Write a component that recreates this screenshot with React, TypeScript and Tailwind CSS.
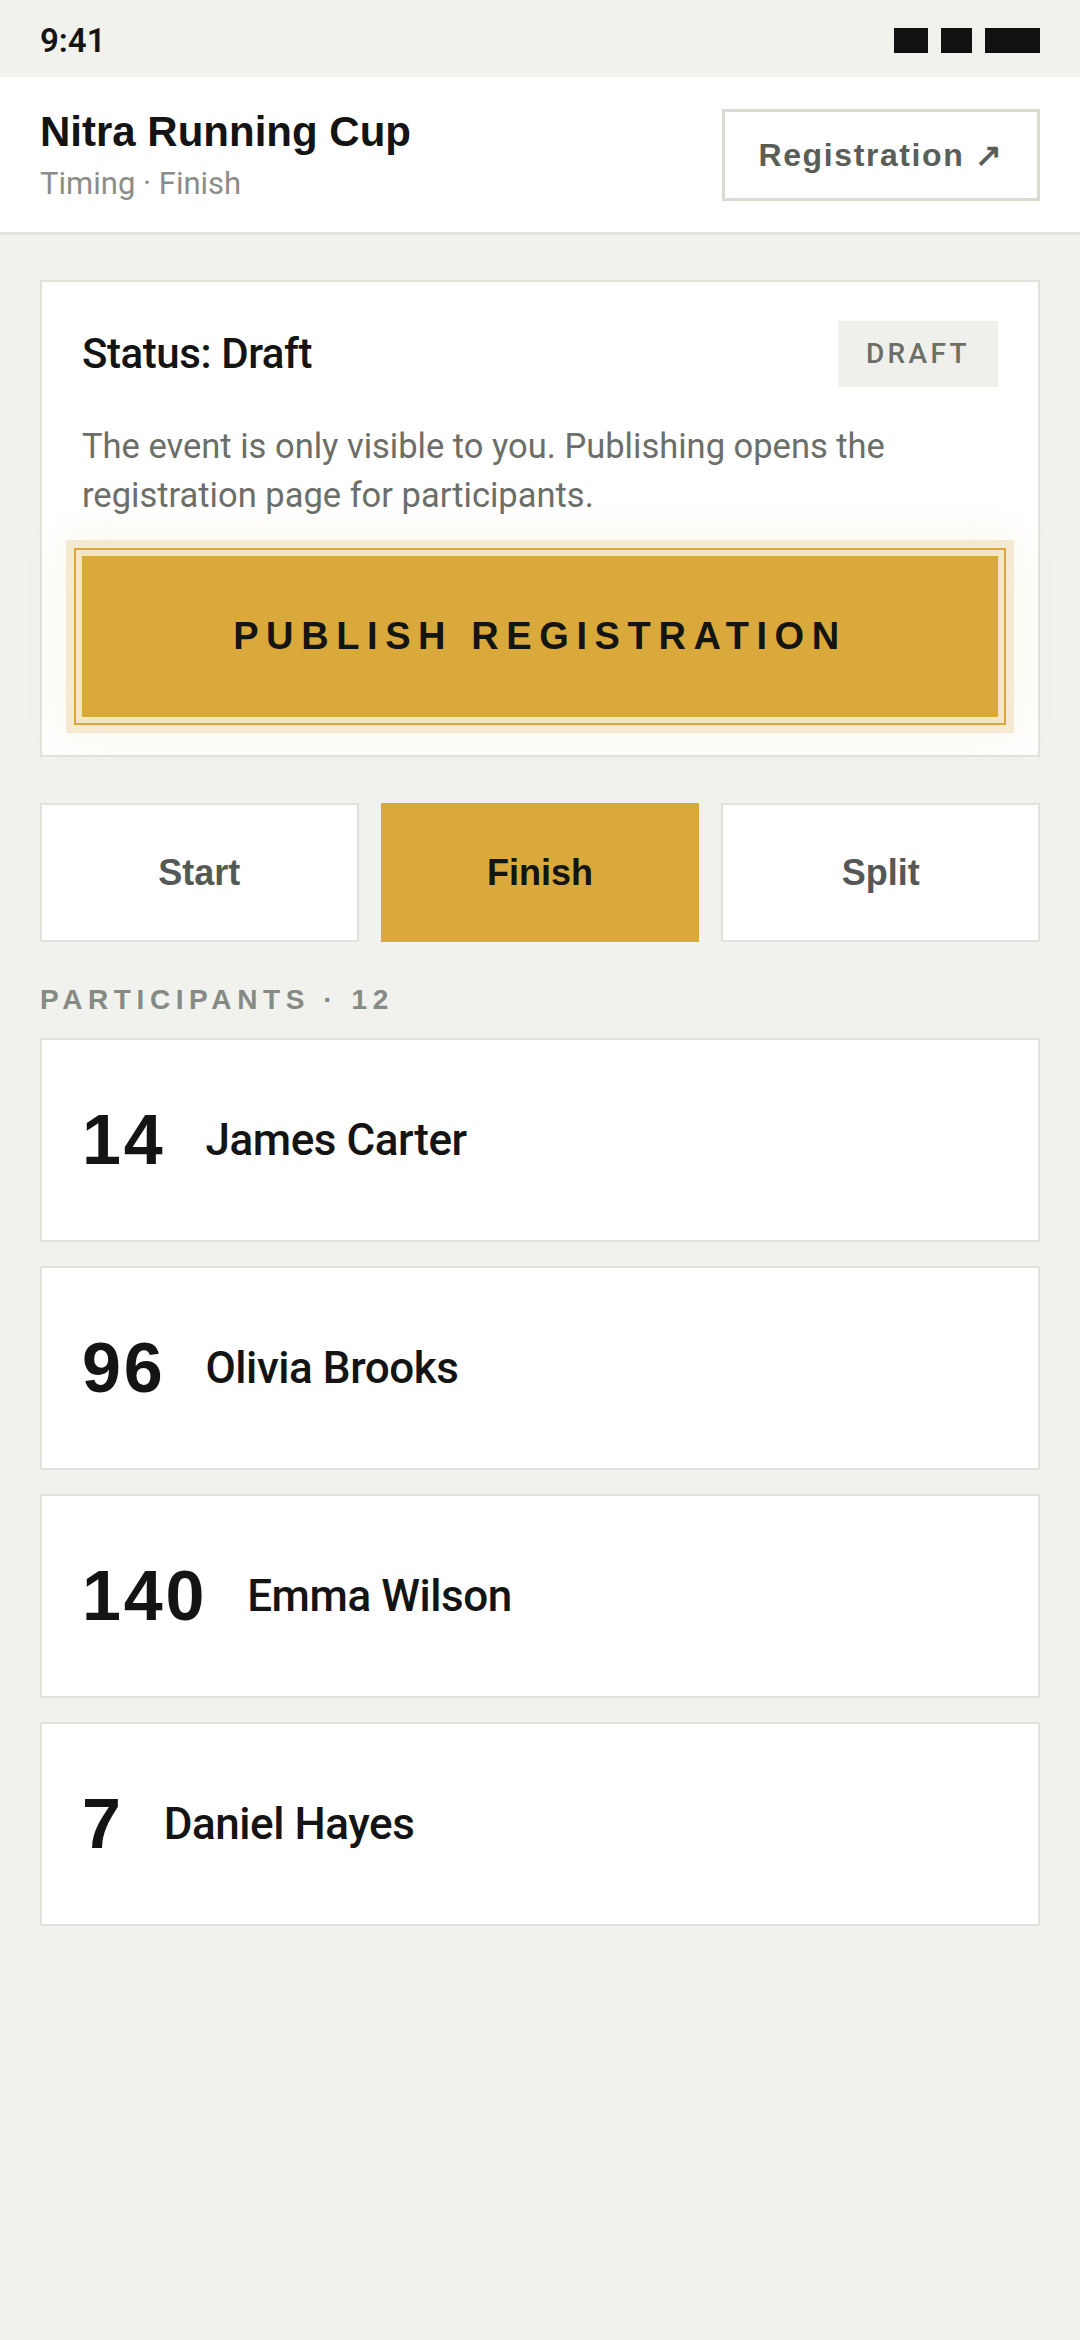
import React from "react";

const HEAD = { fontFamily: '"Liberation Sans", Arial, sans-serif' };
const BODY = { fontFamily: 'Roboto, "Noto Sans", sans-serif' };

const participants = [
  { bib: "14", name: "James Carter" },
  { bib: "96", name: "Olivia Brooks" },
  { bib: "140", name: "Emma Wilson" },
  { bib: "7", name: "Daniel Hayes" },
];

export default function App() {
  return (
    <div className="min-h-[2340px] w-[1080px] bg-[#f1f1ed] text-[#141414]">
      {/* status bar */}
      <div className="flex h-[77px] items-center justify-between px-10 pt-[4px]">
        <span style={BODY} className="text-[33px] font-semibold leading-none text-[#141414]">
          9:41
        </span>
        <div className="flex items-center gap-[13px]">
          <div className="h-[25px] w-[34px] bg-[#111]" />
          <div className="h-[25px] w-[31px] bg-[#111]" />
          <div className="h-[25px] w-[55px] bg-[#111]" />
        </div>
      </div>

      {/* header */}
      <div className="box-border flex h-[158px] items-center justify-between border-b-[3px] border-[#e3e3de] bg-white px-10">
        <div className="flex flex-col">
          <span style={HEAD} className="text-[42px] font-bold leading-[50px] text-[#141414]">
            Nitra Running Cup
          </span>
          <span style={BODY} className="mt-[9px] text-[31px] leading-[36px] text-[#8b8d88]">
            Timing · Finish
          </span>
        </div>
        <div className="box-border flex h-[92px] w-[318px] items-center justify-center border-[3px] border-[#dcd9d2] bg-white">
          <span style={HEAD} className="text-[32px] font-bold tracking-[0.05em] text-[#5a5e59]">
            Registration ↗
          </span>
        </div>
      </div>

      {/* main */}
      <div className="px-10 pt-[45px]">
        {/* status card */}
        <div className="border-2 border-[#e2e2dd] bg-white px-10 pb-[38px] pt-[39px]">
          <div className="flex items-center justify-between">
            <span style={BODY} className="text-[42px] font-medium leading-none tracking-[-0.01em] text-[#141414]">
              Status: Draft
            </span>
            <div className="flex h-[66px] items-center bg-[#efefeb] px-[28px]">
              <span style={BODY} className="text-[28px] font-medium tracking-[0.12em] text-[#6b6e69]">
                DRAFT
              </span>
            </div>
          </div>
          <p style={BODY} className="mt-[35px] text-[34.5px] leading-[49px] text-[#6b6e69]">
            The event is only visible to you. Publishing opens the registration page for participants.
          </p>
          <button
            className="mt-[36px] flex h-[161px] w-full items-center justify-center bg-[#d9a93c] shadow-[0_0_0_6px_#f4e5c6,0_0_0_8px_#d9a93c,0_0_0_16px_#f6e9d1,0_0_40px_16px_rgba(217,169,60,0.12)]"
          >
            <span style={HEAD} className="text-[38px] font-bold tracking-[0.2em] text-[#141410]">
              PUBLISH REGISTRATION
            </span>
          </button>
        </div>

        {/* tabs */}
        <div className="mt-[46px] grid h-[139px] grid-cols-3 gap-[22px]">
          <div className="flex items-center justify-center border-2 border-[#e2e2dd] bg-white">
            <span style={HEAD} className="text-[36px] font-bold text-[#555955]">Start</span>
          </div>
          <div className="flex items-center justify-center border-2 border-[#d9a93c] bg-[#d9a93c]">
            <span style={HEAD} className="text-[36px] font-bold text-[#141410]">Finish</span>
          </div>
          <div className="flex items-center justify-center border-2 border-[#e2e2dd] bg-white">
            <span style={HEAD} className="text-[36px] font-bold text-[#555955]">Split</span>
          </div>
        </div>

        {/* participants */}
        <div style={HEAD} className="mt-[41px] text-[28px] font-bold leading-[34px] tracking-[0.2em] text-[#868a85]">
          PARTICIPANTS · 12
        </div>

        <div className="mt-[21px] flex flex-col gap-[24px]">
          {participants.map((p) => (
            <div
              key={p.bib}
              className="box-border flex h-[204px] items-center gap-[40px] border-2 border-[#e2e2dd] bg-white px-10"
            >
              <span style={HEAD} className="text-[70px] font-bold leading-none tracking-[0.04em] text-[#141414]">
                {p.bib}
              </span>
              <span style={BODY} className="text-[44px] font-medium leading-none tracking-[-0.01em] text-[#141414]">
                {p.name}
              </span>
            </div>
          ))}
        </div>
      </div>
    </div>
  );
}
